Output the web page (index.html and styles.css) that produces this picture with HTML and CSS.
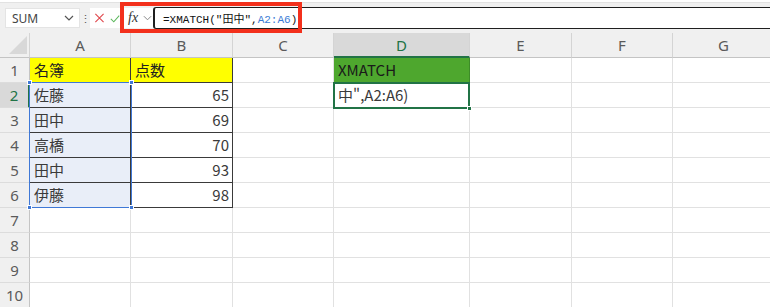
FILE: index.html
```html
<!DOCTYPE html>
<html lang="ja">
<head>
	<meta charset="UTF-8">
	<title>XMATCH</title>
	<link rel="stylesheet" href="styles.css">
</head>
<body>
	<div class="app">
		<!-- 数式バー -->
		<div class="toolbar">
			<div class="ribbon-edge"></div>
			<div class="bar">
				<div class="namebox">
					<span>SUM</span>
					<svg class="chev" width="10" height="6" viewBox="0 0 10 6"><path d="M1 1l4 4 4-4" fill="none" stroke="#555" stroke-width="1.2"/></svg>
				</div>
				<div class="dots">⋮</div>
				<div class="btns">
					<svg width="12" height="12" viewBox="0 0 12 12"><path d="M1.5 1.5l9 9M10.5 1.5l-9 9" stroke="#e0474c" stroke-width="1.2" fill="none"/></svg>
					<svg width="11" height="11" viewBox="0 0 12 12"><path d="M1 6.5l3.5 3.5L11 2.5" stroke="#5cb85c" stroke-width="1.2" fill="none"/></svg>
				</div>
				<div class="fxbox">
					<span class="fx">fx</span>
					<svg width="9" height="6" viewBox="0 0 10 6"><path d="M1 1l4 4 4-4" fill="none" stroke="#888" stroke-width="1.1"/></svg>
				</div>
				<div class="formula">
					<span>=XMATCH("田中",<span class="ref">A2:A6</span>)</span><span class="caret"></span>
				</div>
			</div>
			<div class="mark"></div>
		</div>

		<!-- シート -->
		<div class="sheet">
			<div class="row head">
				<div class="corner"><svg width="18" height="18" viewBox="0 0 18 18"><polygon points="18,0 18,18 0,18" fill="#d8d8d8"/></svg></div>
				<div class="ch">A</div><div class="ch">B</div><div class="ch">C</div><div class="ch sel">D</div><div class="ch">E</div><div class="ch">F</div><div class="ch">G</div>
			</div>
			<div class="row">
				<div class="rh">1</div>
				<div class="cell yellow tb">名簿</div><div class="cell yellow tb">点数</div><div class="cell"></div><div class="cell green">XMATCH</div><div class="cell"></div><div class="cell"></div><div class="cell"></div>
			</div>
			<div class="row">
				<div class="rh sel">2</div>
				<div class="cell rng tb">佐藤</div><div class="cell num tb">65</div><div class="cell"></div><div class="cell">中",A2:A6)</div><div class="cell"></div><div class="cell"></div><div class="cell"></div>
			</div>
			<div class="row">
				<div class="rh">3</div>
				<div class="cell rng tb">田中</div><div class="cell num tb">69</div><div class="cell"></div><div class="cell"></div><div class="cell"></div><div class="cell"></div><div class="cell"></div>
			</div>
			<div class="row">
				<div class="rh">4</div>
				<div class="cell rng tb">高橋</div><div class="cell num tb">70</div><div class="cell"></div><div class="cell"></div><div class="cell"></div><div class="cell"></div><div class="cell"></div>
			</div>
			<div class="row">
				<div class="rh">5</div>
				<div class="cell rng tb">田中</div><div class="cell num tb">93</div><div class="cell"></div><div class="cell"></div><div class="cell"></div><div class="cell"></div><div class="cell"></div>
			</div>
			<div class="row">
				<div class="rh">6</div>
				<div class="cell rng tb">伊藤</div><div class="cell num tb">98</div><div class="cell"></div><div class="cell"></div><div class="cell"></div><div class="cell"></div><div class="cell"></div>
			</div>
			<div class="row">
				<div class="rh">7</div>
				<div class="cell"></div><div class="cell"></div><div class="cell"></div><div class="cell"></div><div class="cell"></div><div class="cell"></div><div class="cell"></div>
			</div>
			<div class="row">
				<div class="rh">8</div>
				<div class="cell"></div><div class="cell"></div><div class="cell"></div><div class="cell"></div><div class="cell"></div><div class="cell"></div><div class="cell"></div>
			</div>
			<div class="row">
				<div class="rh">9</div>
				<div class="cell"></div><div class="cell"></div><div class="cell"></div><div class="cell"></div><div class="cell"></div><div class="cell"></div><div class="cell"></div>
			</div>
			<div class="row">
				<div class="rh">10</div>
				<div class="cell"></div><div class="cell"></div><div class="cell"></div><div class="cell"></div><div class="cell"></div><div class="cell"></div><div class="cell"></div>
			</div>

			<!-- 参照範囲 A2:A6 と アクティブセル D2 -->
			<div class="range">
				<i class="h tl"></i><i class="h tr"></i><i class="h bl"></i><i class="h br"></i>
			</div>
			<div class="active"><i class="h br"></i></div>
		</div>
	</div>
</body>
</html>
```

FILE: styles.css
```css
*{
	margin: 0;
	padding: 0;
	box-sizing: border-box;
}
body{
	width: 770px;
	height: 307px;
	overflow: hidden;
	background: #fff;
	font-family: "Noto Sans CJK JP", "Noto Sans", sans-serif;
}
.app{
	position: relative;
}

/* 数式バー */
.toolbar{
	height: 33px;
	background: #f0f0f0;
	position: relative;
}
.ribbon-edge{
	height: 3px;
	background: #fff;
	border-bottom: 1px solid #e2e2e2;
}
.bar{
	display: flex;
	align-items: center;
	height: 22px;
	margin-top: 4px;
}
.namebox{
	margin-left: 5px;
	width: 75px;
	height: 20px;
	background: #fff;
	border: 1px solid #e4e4e4;
	display: flex;
	align-items: center;
	justify-content: space-between;
	padding: 0 5px 0 6px;
	font-family: "Noto Sans", sans-serif;
	font-size: 12px;
	color: #444;
}
.dots{
	width: 10px;
	text-align: center;
	font-size: 11px;
	color: #555;
	line-height: 20px;
}
.btns{
	width: 30px;
	height: 20px;
	background: #fff;
	display: flex;
	align-items: center;
	gap: 5px;
	padding-left: 4px;
}
.fxbox{
	margin-left: 2px;
	width: 31px;
	height: 20px;
	background: #fff;
	display: flex;
	align-items: center;
	gap: 5px;
	padding-left: 6px;
}
.fx{
	font-family: "Liberation Serif", serif;
	font-style: italic;
	font-size: 14px;
	color: #333;
}
.formula{
	flex: 1;
	height: 22px;
	background: #fff;
	border: 1px solid #1f1f1f;
	border-left-width: 2px;
	border-right: none;
	border-radius: 3px 0 0 3px;
	display: flex;
	align-items: center;
	padding-left: 8px;
	font-family: "Liberation Mono", "Noto Sans CJK JP", monospace;
	font-size: 11px;
	color: #111;
}
.ref{
	color: #3a7bd5;
}
.caret{
	width: 1px;
	height: 14px;
	background: #111;
	margin-left: 1px;
}
.mark{
	position: absolute;
	left: 120px;
	top: 2px;
	width: 182px;
	height: 31px;
	border: 4px solid #f3301c;
}

/* シート */
.sheet{
	position: relative;
}
.row{
	display: grid;
	grid-template-columns: 30px 101px 102px 101px 136px 102px 101px 102px;
	height: 25px;
}
.row > div{
	border-right: 1px solid #e1e1e1;
	border-bottom: 1px solid #e1e1e1;
	height: 25px;
	line-height: 24px;
	white-space: nowrap;
	overflow: hidden;
}
.head > div{
	background: #f0f0f0;
	border-right-color: #d4d4d4;
	border-bottom-color: #c4c4c4;
}
.corner{
	display: flex;
	align-items: flex-end;
	justify-content: flex-end;
	padding: 0 2px 3px 0;
}
.ch, .rh{
	font-family: "Noto Sans", sans-serif;
	font-size: 15px;
	color: #5a5a5a;
	text-align: center;
}
.rh{
	background: #f0f0f0;
	border-right-color: #c4c4c4 !important;
	border-bottom-color: #dcdcdc !important;
}
.head .sel{
	background: #d9d9d9;
	color: #217346;
	border-bottom: 2px solid #217346;
}
.rh.sel{
	background: #d9d9d9;
	color: #217346;
	border-right: 2px solid #217346 !important;
}
.cell{
	font-size: 15px;
	color: #3a3a3a;
	padding-left: 4px;
}
.tb{
	border-right-color: #3a3a3a !important;
	border-bottom-color: #3a3a3a !important;
}
.yellow{
	background: #ffff00;
	color: #222;
}
.green{
	background: #4ea72e;
	color: #1a1a1a;
	border-color: #3d8c28 !important;
}
.rng{
	background: #e9eef8;
}
.num{
	text-align: right;
	padding: 0 3px 0 0;
}

/* 選択範囲 */
.range{
	position: absolute;
	left: 29px;
	top: 49px;
	width: 103px;
	height: 126px;
	border: 1px solid #3f78d6;
}
.active{
	position: absolute;
	left: 333px;
	top: 49px;
	width: 137px;
	height: 27px;
	border: 2px solid #217346;
}
.h{
	position: absolute;
	width: 5px;
	height: 5px;
	background: #3f78d6;
	border: 1px solid #fff;
}
.tl{ left: -3px; top: -3px; }
.tr{ right: -3px; top: -3px; }
.bl{ left: -3px; bottom: -3px; }
.br{ right: -3px; bottom: -3px; }
.active .h{
	background: #217346;
	right: -4px;
	bottom: -4px;
}
```
